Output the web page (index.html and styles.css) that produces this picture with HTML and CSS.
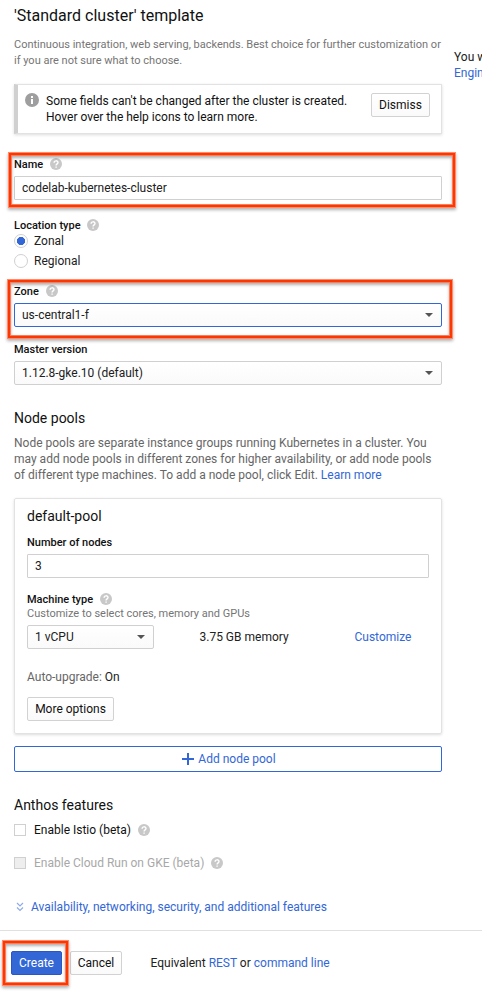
FILE: index.html
```html
<!DOCTYPE html>
<html lang="en">
<head>
<meta charset="utf-8">
<title>Create a Kubernetes cluster</title>
<link rel="stylesheet" href="styles.css">
</head>
<body>
<svg width="0" height="0" class="sprite">
  <symbol id="help" viewBox="0 0 12 12">
    <circle cx="6" cy="6" r="6" fill="#c8c8c8"/>
    <path d="M4.1 4.8C4.1 2.2 8 2.2 8 4.6 8 5.9 6.1 5.9 6.1 7.5" fill="none" stroke="#fff" stroke-width="1.4"/>
    <path d="M5.4 8.4h1.4v1.4H5.4z" fill="#fff"/>
  </symbol>
  <symbol id="caret" viewBox="0 0 8 4"><path d="M0 0h8L4 4z" fill="#555"/></symbol>
</svg>
<div class="layout">
  <main class="form">
    <h1 class="title">'Standard cluster' template</h1>
    <p class="intro">Continuous integration, web serving, backends. Best choice for further customization or<br>if you are not sure what to choose.</p>
    <section class="notice">
      <svg class="info" viewBox="0 0 14 14"><circle cx="7" cy="7" r="7" fill="#9e9e9e"/><path d="M6 3h2v2H6zM6 6h2v5H6z" fill="#fff"/></svg>
      <p class="notice-text">Some fields can't be changed after the cluster is created.<br>Hover over the help icons to learn more.</p>
      <button class="btn dismiss">Dismiss</button>
    </section>

    <div class="field name">
      <div class="label">Name <svg class="help"><use href="#help"/></svg></div>
      <div class="input">codelab-kubernetes-cluster</div>
      <span class="mark mark-name"></span>
    </div>

    <div class="location">
      <div class="label label-location">Location type <svg class="help"><use href="#help"/></svg></div>
      <div class="radio-row"><span class="radio checked"></span>Zonal</div>
      <div class="radio-row regional"><span class="radio"></span>Regional</div>
    </div>

    <div class="field zone">
      <div class="label">Zone <svg class="help"><use href="#help"/></svg></div>
      <div class="input select focused">us-central1-f<svg class="caret"><use href="#caret"/></svg></div>
      <span class="mark mark-zone"></span>
    </div>

    <div class="field master">
      <div class="label">Master version</div>
      <div class="input select">1.12.8-gke.10 (default)<svg class="caret"><use href="#caret"/></svg></div>
    </div>

    <h2 class="heading pools-heading">Node pools</h2>
    <p class="pools-text">Node pools are separate instance groups running Kubernetes in a cluster. You<br>may add node pools in different zones for higher availability, or add node pools<br>of different type machines. To add a node pool, click Edit. <a>Learn more</a></p>

    <section class="card">
      <h2 class="heading">default-pool</h2>
      <div class="field nodes">
        <div class="label">Number of nodes</div>
        <div class="input">3</div>
      </div>
      <div class="label machine">Machine type <svg class="help"><use href="#help"/></svg></div>
      <p class="hint">Customize to select cores, memory and GPUs</p>
      <div class="machine-row">
        <div class="input select cpu">1 vCPU<svg class="caret"><use href="#caret"/></svg></div>
        <span class="memory">3.75 GB memory</span>
        <a>Customize</a>
      </div>
      <p class="upgrade">Auto-upgrade: <span class="value">On</span></p>
      <button class="btn more">More options</button>
    </section>

    <button class="add"><svg class="plus" viewBox="0 0 12 12"><path d="M6 0v12M0 6h12" stroke="#3367d6" stroke-width="2"/></svg>Add node pool</button>

    <h2 class="heading anthos">Anthos features</h2>
    <div class="check-row"><span class="box"></span>Enable Istio (beta)<svg class="help"><use href="#help"/></svg></div>
    <div class="check-row disabled"><span class="box"></span>Enable Cloud Run on GKE (beta)<svg class="help"><use href="#help"/></svg></div>

    <a class="expander"><svg class="chevrons" viewBox="0 0 8 10"><path d="M1 1l3 3 3-3M1 5.5l3 3 3-3" fill="none" stroke="#8fabe8" stroke-width="1.2"/></svg>Availability, networking, security, and additional features</a>
  </main>
  <aside class="aside">You will be billed<br><a>Engine pricing</a></aside>
</div>
<footer class="footer">
  <div class="create-wrap"><button class="btn create">Create</button><span class="mark mark-create"></span></div>
  <button class="btn cancel">Cancel</button>
  <span class="equiv">Equivalent <a>REST</a> or <a>command line</a></span>
</footer>
</body>
</html>
```

FILE: styles.css
```css
* { box-sizing: border-box; }
body {
  margin: 0;
  height: 998px;
  overflow: hidden;
  background: #fff;
  color: #212121;
  font: 12px/16px Roboto, "Liberation Sans", sans-serif;
}
p, h1, h2 { margin: 0; font-weight: 400; }
a { color: #3367d6; }
.sprite { position: absolute; }
.layout { display: flex; height: 930px; width: 482px; overflow: hidden; }
.form { width: 428px; margin-left: 14px; flex: none; padding-top: 6px; }
.aside { margin: 49px 0 0 12px; white-space: nowrap; flex: none; }

.title { font-size: 16px; line-height: 20px; color: #111; }
.intro { margin-top: 11px; font-size: 11px; color: #757575; white-space: nowrap; }

.notice {
  display: flex;
  height: 50px;
  margin-top: 15px;
  border: 1px solid #e2e2e2;
  border-left: 4px solid #d0d0d0;
  box-shadow: 0 1px 3px rgba(0, 0, 0, .14);
}
.info { width: 14px; height: 14px; margin: 8px 7px 0; }
.notice-text { margin-top: 8px; color: #111; white-space: nowrap; flex: 1; }
.btn {
  display: block;
  height: 24px;
  padding: 0;
  border: 1px solid #d2d2d2;
  border-radius: 2px;
  background: linear-gradient(#fff, #fafafa);
  color: #111;
  font: inherit;
  text-align: center;
}
.dismiss { width: 59px; margin: 8px 11px 0 0; flex: none; }

.label {
  display: flex;
  align-items: center;
  gap: 7px;
  height: 16px;
  padding-top: 2px;
  color: #111;
  font-size: 11px;
  font-weight: 500;
}
.label-location { gap: 6px; }
.help { width: 12px; height: 12px; flex: none; }
.label .help { margin-bottom: 2px; }
.field { position: relative; }
.input {
  height: 24px;
  margin-top: 4px;
  padding: 0 7px;
  border: 1px solid #d0d0d0;
  border-radius: 1px;
  line-height: 22px;
}
.select {
  display: flex;
  align-items: center;
  justify-content: space-between;
  border-radius: 2px;
  background: linear-gradient(#fff, #fafafa);
}
.focused { border-color: #3367d6; }
.caret { width: 8px; height: 4px; margin-right: 1px; }
.name { margin-top: 22px; }

/* Highlight frames: a solid stroke with a lighter 1px edge on both sides */
.mark {
  position: absolute;
  border: 2px solid #ff3600;
  box-shadow:
    0 0 0 1px #ff8a6c,
    inset 0 0 0 1px #f5805f,
    0 2px 3px 1px rgba(0, 0, 0, .3),
    inset 0 2px 3px 1px rgba(0, 0, 0, .3);
  pointer-events: none;
}
.mark-name { left: -5px; top: -3px; width: 446px; height: 54px; }
.mark-zone { left: -6px; top: -3px; width: 444px; height: 58px; }
.mark-create { left: -8px; top: -10px; width: 65px; height: 44px; }

.location { margin-top: 17px; }
.radio-row { display: flex; align-items: center; gap: 6px; height: 16px; }
.regional { margin-top: 4px; }
.radio { width: 14px; height: 14px; border: 1px solid #d0d0d0; border-radius: 50%; }
.checked { background: radial-gradient(circle, #3367d6 0 3.8px, #fff 4.4px); }
.zone { margin-top: 14px; }
.master { margin-top: 14px; }

.heading { font-size: 14px; line-height: 20px; color: #111; }
.pools-heading { margin-top: 23px; }
.pools-text { margin-top: 7px; color: #666; white-space: nowrap; }

.card {
  height: 236px;
  margin-top: 15px;
  padding: 7px 12px 0;
  border: 1px solid #e2e2e2;
  border-radius: 2px;
  box-shadow: 0 1px 3px rgba(0, 0, 0, .14);
}
.nodes { margin-top: 8px; }
.machine { margin-top: 13px; }
.hint { line-height: 14px; font-size: 11px; color: #757575; }
.machine-row { display: flex; align-items: center; margin-top: 4px; }
.cpu { width: 127px; margin: 0; }
.memory { width: 155px; margin-left: 45.5px; }
.upgrade { margin-top: 20px; color: #666; }
.value { color: #212121; }
.more { width: 87px; margin-top: 12px; }

.add {
  display: flex;
  align-items: center;
  justify-content: center;
  gap: 4px;
  width: 100%;
  height: 26px;
  margin-top: 12px;
  padding: 0 0 0 2px;
  border: 1px solid #3367d6;
  border-radius: 2px;
  background: #fff;
  color: #3367d6;
  font: inherit;
}
.plus { width: 12px; height: 12px; }
.anthos { margin-top: 23px; }
.check-row { display: flex; align-items: center; height: 16px; margin-top: 7px; color: #111; }
.check-row .help { margin-left: 7px; }
.box { width: 12px; height: 12px; margin-right: 8px; border: 1px solid #d0d0d0; }
.disabled { margin-top: 17px; color: #a8a8a8; }
.disabled .box { background: #eee; }
.expander { display: flex; align-items: center; height: 16px; margin-top: 28px; }
.chevrons { width: 8px; height: 10px; margin: 0 7px 0 2px; }

.footer { display: flex; height: 68px; padding: 20px 0 0 11px; border-top: 1px solid #e0e0e0; }
.create-wrap { position: relative; width: 51px; }
.create { width: 51px; border-color: #2a56c6; background: #3367d6; color: #fff; }
.cancel { width: 52px; margin-left: 8px; }
.equiv { margin: 4px 0 0 28.5px; }
```
